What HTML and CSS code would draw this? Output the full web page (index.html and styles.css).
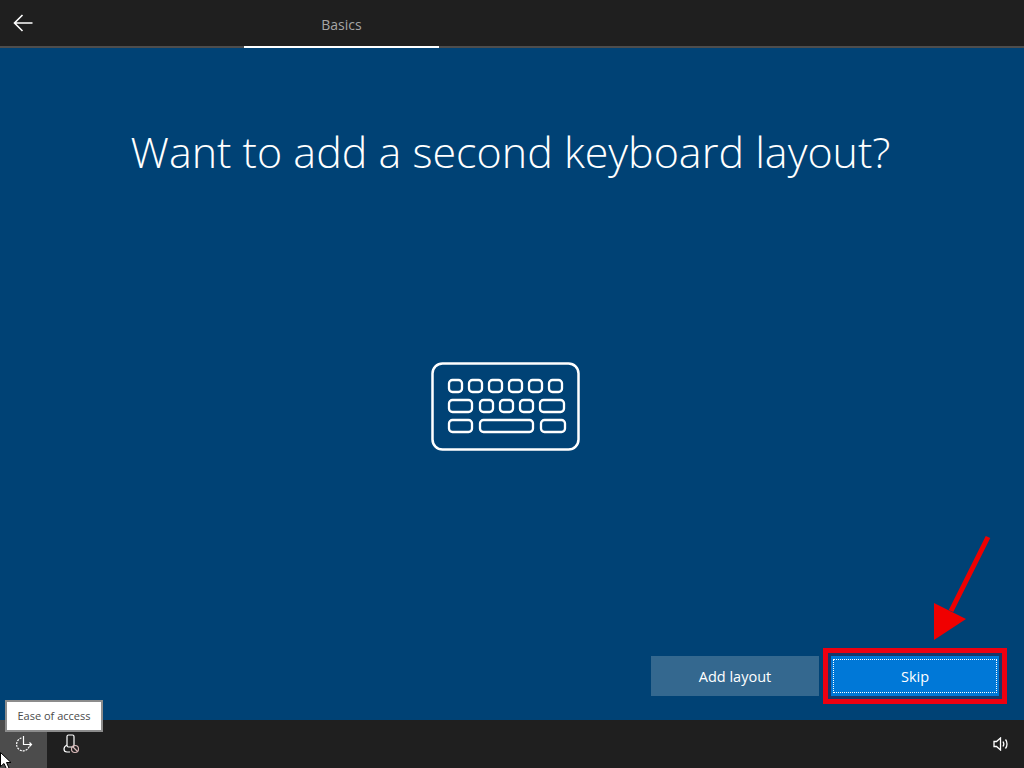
FILE: index.html
```html
<!DOCTYPE html>
<html lang="en">
<head>
    <meta charset="UTF-8">
    <meta name="viewport" content="width=device-width, initial-scale=1.0">
    <title>Basics</title>
    <link rel="stylesheet" href="styles.css">
</head>
<body>
    <header class="top-bar">
        <button class="back-btn" aria-label="Back">
            <svg width="20" height="18" viewBox="0 0 20 18" fill="none" stroke="#ffffff" stroke-width="1.6">
                <path d="M19.5 9H1.5M9.5 1L1.5 9l8 8"/>
            </svg>
        </button>
        <div class="tab">Basics</div>
    </header>

    <main class="content">
        <h1>Want to add a second keyboard layout?</h1>

        <div class="illustration">
            <svg width="150" height="90" viewBox="0 0 150 90" fill="none" stroke="#ffffff" stroke-width="2.3">
                <rect x="1.500" y="1.500" width="146" height="86" rx="10" stroke-width="2.500"/>
                <rect x="18" y="18" width="13" height="12" rx="3.500"/>
                <rect x="38" y="18" width="13" height="12" rx="3.500"/>
                <rect x="58" y="18" width="13" height="12" rx="3.500"/>
                <rect x="78" y="18" width="13" height="12" rx="3.500"/>
                <rect x="98" y="18" width="13" height="12" rx="3.500"/>
                <rect x="118" y="18" width="13" height="12" rx="3.500"/>
                <rect x="18" y="38" width="23" height="12" rx="3.500"/>
                <rect x="49" y="38" width="13" height="12" rx="3.500"/>
                <rect x="69" y="38" width="13" height="12" rx="3.500"/>
                <rect x="89" y="38" width="13" height="12" rx="3.500"/>
                <rect x="109" y="38" width="24" height="12" rx="3.500"/>
                <rect x="18" y="58" width="23" height="12" rx="3.500"/>
                <rect x="49" y="58" width="53" height="12" rx="3.500"/>
                <rect x="110" y="58" width="24" height="12" rx="3.500"/>
            </svg>
        </div>

        <div class="actions">
            <button class="btn btn-secondary">Add layout</button>
            <button class="btn btn-primary">Skip</button>
        </div>

        <!-- red arrow pointing at Skip -->
        <svg class="callout-arrow" width="60" height="110" viewBox="0 0 60 110">
            <path d="M55 2L18 76" stroke="#f00000" stroke-width="5" fill="none"/>
            <path d="M1 68L33 84L1 105z" fill="#f00000"/>
        </svg>
    </main>

    <footer class="bottom-bar">
        <div class="bottom-left">
            <button class="icon-btn icon-btn-active" aria-label="Ease of access">
                <svg width="18" height="18" viewBox="0 0 18 18" fill="none" stroke="#ffffff" stroke-width="1.200">
                    <path d="M6.500 3A6.500 6.500 0 1 0 14.500 10.500" stroke-dasharray="2 1"/>
                    <path d="M8.500 1v8.500h8M14.500 7.500l2 2-2 2"/>
                </svg>
            </button>
            <button class="icon-btn" aria-label="Narrator">
                <svg width="18" height="20" viewBox="0 0 18 20" fill="none" stroke="#ffffff" stroke-width="1.200">
                    <rect x="5" y="1" width="7" height="12" rx="1.500"/>
                    <path d="M5 11c-2 1-3 2-3 4s1 3 3 3h3"/>
                    <circle cx="13" cy="15" r="3.500" stroke="#d8b8b8"/>
                    <path d="M10.500 12.500l5 5" stroke="#d8b8b8"/>
                </svg>
            </button>
        </div>
        <button class="icon-btn" aria-label="Volume">
            <svg width="16" height="14" viewBox="0 0 16 14" fill="none" stroke="#ffffff" stroke-width="1.300">
                <path d="M1 4.500h2.500L7.500 1v12L3.500 9.500H1z"/>
                <path d="M10 4.500c1 1.500 1 3.500 0 5M12.500 2.500c2 2.500 2 6.500 0 9"/>
            </svg>
        </button>
    </footer>

    <div class="tooltip">Ease of access</div>

    <svg class="cursor" width="12" height="18" viewBox="0 0 12 18">
        <path d="M0.500 0.500v14l3.500-3 2.500 5.500 2.500-1-2.500-5.500h4.500z" fill="#ffffff" stroke="#000000"/>
    </svg>
</body>
</html>
```

FILE: styles.css
```css
* {
    margin: 0;
    padding: 0;
    box-sizing: border-box;
}

html, body {
    height: 100%;
    overflow: hidden;
}

body {
    background-color: #004275;
    color: #ffffff;
    font-family: 'Open Sans', 'Noto Sans', sans-serif;
    display: flex;
    flex-direction: column;
    position: relative;
}

button {
    font-family: inherit;
    border: none;
    background: none;
    color: inherit;
}

.top-bar {
    height: 48px;
    background-color: #1f1f1f;
    border-bottom: 2px solid #4d4d4d;
    display: flex;
    flex-shrink: 0;
}

.back-btn {
    width: 244px;
    height: 46px;
    display: flex;
    align-items: center;
    padding-left: 13px;
}

.tab {
    width: 195px;
    height: 48px;
    border-bottom: 2px solid #ffffff;
    color: #a6a6a6;
    font-size: 14px;
    text-align: center;
    line-height: 49px;
}

.content {
    flex: 1;
    display: flex;
    flex-direction: column;
    position: relative;
}

h1 {
    font-size: 43px;
    font-weight: 300;
    text-align: center;
    line-height: 60px;
    margin-top: 74px;
    padding-right: 3px;
}

.illustration {
    margin-top: 180px;
    margin-left: 431px;
    height: 90px;
}

.actions {
    margin-top: auto;
    padding: 0 25px 24px 0;
    display: flex;
    justify-content: flex-end;
    gap: 12px;
}

.btn {
    width: 168px;
    height: 40px;
    font-size: 14.5px;
    position: relative;
}

.btn-secondary {
    background-color: #34688f;
}

.btn-primary {
    background-color: #0078d7;
    box-shadow: 0 0 0 3px #17386b, 0 0 0 8px #ee0010;
}

/* dotted keyboard focus rectangle */
.btn-primary::after {
    content: "";
    position: absolute;
    inset: 3px 2px;
    border: 1px dotted #ffffff;
}

.callout-arrow {
    position: absolute;
    left: 933px;
    top: 487px;
}

.bottom-bar {
    height: 48px;
    background-color: #1f1f1f;
    display: flex;
    justify-content: space-between;
    flex-shrink: 0;
}

.bottom-left {
    display: flex;
}

.icon-btn {
    width: 47px;
    height: 48px;
    display: flex;
    align-items: center;
    justify-content: center;
}

.icon-btn-active {
    background-color: #4c4c4c;
}

.tooltip {
    position: absolute;
    left: 5px;
    top: 700px;
    width: 98px;
    height: 32px;
    background-color: #ffffff;
    border: 2px solid #8c8c8c;
    color: #4a4a4a;
    font-size: 11px;
    line-height: 28px;
    text-align: center;
}

.cursor {
    position: absolute;
    left: 0;
    top: 752px;
}
```
